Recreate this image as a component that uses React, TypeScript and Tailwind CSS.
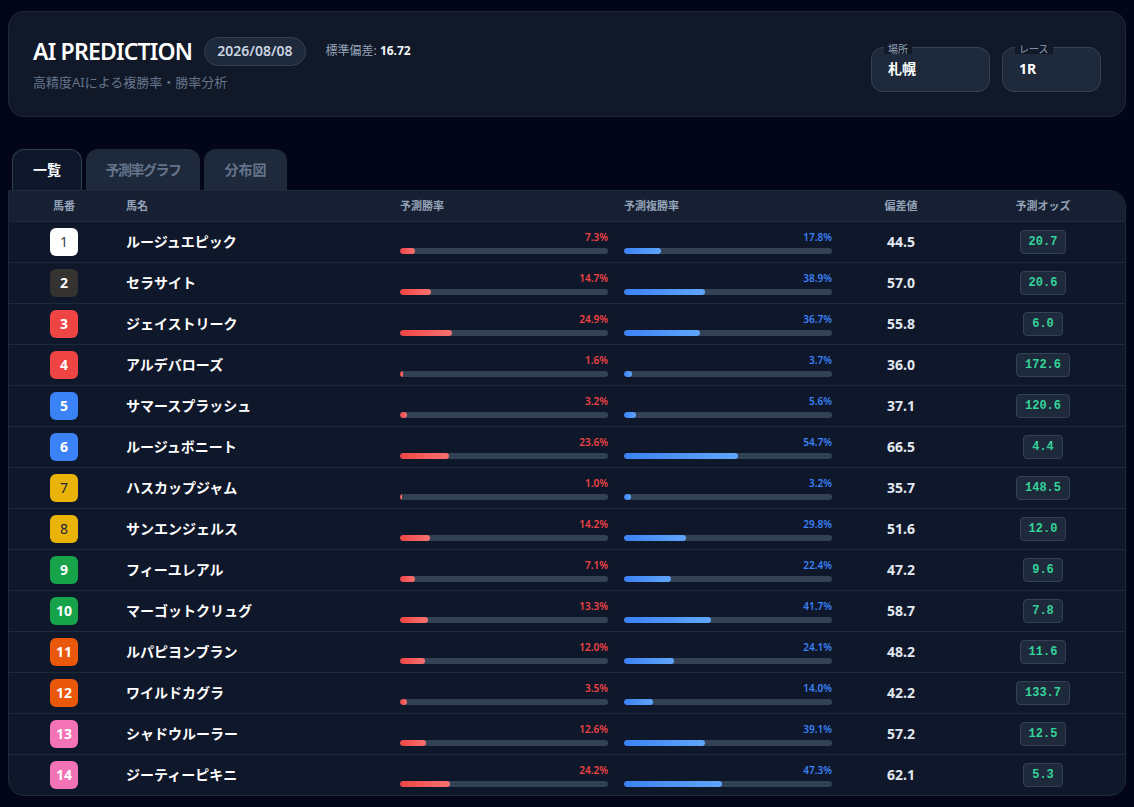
import React from "react";

type Horse = { n: number; name: string; win: number; place: number; dev: number; odds: string };

const horses: Horse[] = [
  { n: 1, name: "ルージュエピック", win: 7.3, place: 17.8, dev: 44.5, odds: "20.7" },
  { n: 2, name: "セラサイト", win: 14.7, place: 38.9, dev: 57.0, odds: "20.6" },
  { n: 3, name: "ジェイストリーク", win: 24.9, place: 36.7, dev: 55.8, odds: "6.0" },
  { n: 4, name: "アルデバローズ", win: 1.6, place: 3.7, dev: 36.0, odds: "172.6" },
  { n: 5, name: "サマースプラッシュ", win: 3.2, place: 5.6, dev: 37.1, odds: "120.6" },
  { n: 6, name: "ルージュボニート", win: 23.6, place: 54.7, dev: 66.5, odds: "4.4" },
  { n: 7, name: "ハスカップジャム", win: 1.0, place: 3.2, dev: 35.7, odds: "148.5" },
  { n: 8, name: "サンエンジェルス", win: 14.2, place: 29.8, dev: 51.6, odds: "12.0" },
  { n: 9, name: "フィーユレアル", win: 7.1, place: 22.4, dev: 47.2, odds: "9.6" },
  { n: 10, name: "マーゴットクリュグ", win: 13.3, place: 41.7, dev: 58.7, odds: "7.8" },
  { n: 11, name: "ルパピヨンブラン", win: 12.0, place: 24.1, dev: 48.2, odds: "11.6" },
  { n: 12, name: "ワイルドカグラ", win: 3.5, place: 14.0, dev: 42.2, odds: "133.7" },
  { n: 13, name: "シャドウルーラー", win: 12.6, place: 39.1, dev: 57.2, odds: "12.5" },
  { n: 14, name: "ジーティーピキニ", win: 24.2, place: 47.3, dev: 62.1, odds: "5.3" },
];

function badgeClass(n: number): string {
  switch (n) {
    case 1:
      return "bg-white text-[#374151] font-normal";
    case 2:
      return "bg-[#35332f] text-white font-bold";
    case 3:
    case 4:
      return "bg-[#ef4444] text-white font-bold";
    case 5:
    case 6:
      return "bg-[#3b82f6] text-white font-bold";
    case 7:
    case 8:
      return "bg-[#eab308] text-[#1f2937] font-normal";
    case 9:
    case 10:
      return "bg-[#16a34a] text-white font-bold";
    case 11:
    case 12:
      return "bg-[#ea580c] text-white font-bold";
    default:
      return "bg-[#f472b6] text-white font-bold";
  }
}

const GRID = "grid grid-cols-[110px_274px_224px_224px_120px_1fr] items-center";

function Bar({ value, kind }: { value: number; kind: "win" | "place" }) {
  const text = kind === "win" ? "text-[#ef4444]" : "text-[#3b82f6]";
  const fill =
    kind === "win"
      ? "bg-gradient-to-r from-[#ef4444] to-[#f87171]"
      : "bg-gradient-to-r from-[#3b82f6] to-[#60a5fa]";
  return (
    <div className="flex flex-col gap-1 pl-[7px] pr-[9px]">
      <div className={`text-right text-[10px] leading-[14px] font-semibold ${text}`}>{value.toFixed(1)}%</div>
      <div className="h-1.5 w-full overflow-hidden rounded-full bg-[#334155]">
        <div className={`h-full rounded-full ${fill}`} style={{ width: `${value}%` }} />
      </div>
    </div>
  );
}

export default function App() {
  return (
    <div
      className="min-h-screen bg-[#020617] px-2 pt-[11px] pb-3 text-white"
      style={{ fontFamily: '"Noto Sans", "Noto Sans CJK JP", sans-serif' }}
    >
      {/* Header card */}
      <div className="flex items-center justify-between rounded-2xl border border-[#1e293b] bg-[#111827] px-6 py-6">
        <div className="flex flex-col">
          <div className="flex items-center">
            <h1 className="text-[23px] font-semibold leading-[30px] tracking-[-0.8px] text-white">AI PREDICTION</h1>
            <span className="ml-3 flex h-[29px] items-center rounded-full border border-[#334155] bg-[#1e293b] px-3 text-sm font-semibold text-[#cbd5e1]">
              2026/08/08
            </span>
            <span className="ml-5 text-xs text-[#94a3b8]">
              標準偏差: <span className="font-bold text-[#f1f5f9]">16.72</span>
            </span>
          </div>
          <div className="mt-1.5 text-[13px] leading-5 text-[#64748b]">高精度AIによる複勝率・勝率分析</div>
        </div>
        <div className="flex items-center gap-3 pt-[10px]">
          <div className="relative flex h-[45px] w-[119px] items-center rounded-xl border border-[#334155] bg-[#1e293b] px-4">
            <span className="absolute -top-[4px] left-3 bg-[#111827] px-1 text-[10px] leading-[10px] text-[#94a3b8]">場所</span>
            <span className="text-sm font-bold text-white">札幌</span>
          </div>
          <div className="relative flex h-[45px] w-[99px] items-center rounded-xl border border-[#334155] bg-[#1e293b] px-4">
            <span className="absolute -top-[4px] left-3 bg-[#111827] px-1 text-[10px] leading-[10px] text-[#94a3b8]">レース</span>
            <span className="text-sm font-bold text-white">1R</span>
          </div>
        </div>
      </div>

      {/* Tabs */}
      <div className="mt-8 flex gap-1 pl-1">
        <button className="h-[41px] w-[70px] rounded-t-xl border border-b-0 border-[#334155] bg-[#0f172a] text-sm font-bold text-white">
          一覧
        </button>
        <button className="h-[41px] w-[114px] rounded-t-xl bg-[#1e293b] text-sm font-semibold tracking-[-1.5px] text-[#64748b]">
          予測率グラフ
        </button>
        <button className="h-[41px] w-[83px] rounded-t-xl bg-[#1e293b] text-sm font-semibold text-[#64748b]">
          分布図
        </button>
      </div>

      {/* Table */}
      <div className="overflow-hidden rounded-2xl rounded-tl-none border border-[#1e293b] bg-[#0f172a]">
        <div className={`${GRID} h-[30px] bg-[#162032] text-[11px] font-semibold text-[#94a3b8]`}>
          <div className="text-center">馬番</div>
          <div className="pl-[7px]">馬名</div>
          <div className="pl-[7px]">予測勝率</div>
          <div className="pl-[7px]">予測複勝率</div>
          <div className="text-center">偏差値</div>
          <div className="text-center">予測オッズ</div>
        </div>
        {horses.map((h) => (
          <div key={h.n} className={`${GRID} h-[41px] border-t border-[#1e293b]`}>
            <div className="flex justify-center">
              <div className={`flex h-7 w-7 items-center justify-center rounded-md text-sm ${badgeClass(h.n)}`}>
                {h.n}
              </div>
            </div>
            <div className="pl-[7px] text-sm font-bold text-white">{h.name}</div>
            <Bar value={h.win} kind="win" />
            <Bar value={h.place} kind="place" />
            <div className="text-center text-sm font-bold text-[#e2e8f0]">{h.dev.toFixed(1)}</div>
            <div className="flex justify-center">
              <span
                className="rounded border border-[#334155] bg-[#1e293b] px-2 py-[3px] text-xs font-bold text-[#34d399]"
                style={{ fontFamily: '"Liberation Mono", "DejaVu Sans Mono", monospace' }}
              >
                {h.odds}
              </span>
            </div>
          </div>
        ))}
      </div>
    </div>
  );
}
